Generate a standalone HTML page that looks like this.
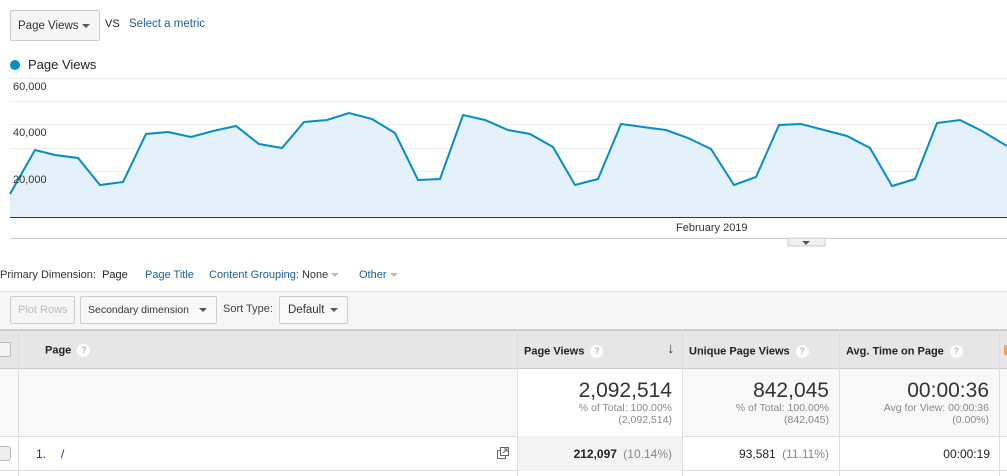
<!DOCTYPE html><html><head><style>
body{margin:0;width:1007px;height:476px;overflow:hidden;background:#fff;font-family:"Liberation Sans",Arial,sans-serif;color:#222;position:relative}
.a{position:absolute}
.btn{position:absolute;border:1px solid #ccc;border-radius:2px;background:#f5f5f5;font-size:11.5px;color:#333;box-sizing:border-box;display:flex;align-items:center;justify-content:space-between;white-space:nowrap;padding:0 9px 0 7px}
.car{display:inline-block;width:0;height:0;border-left:4px solid transparent;border-right:4px solid transparent;border-top:4px solid #555;vertical-align:middle}
.q{display:inline-block;width:13px;height:13px;border-radius:50%;background:#fff;color:#bbb;font-size:9px;text-align:center;line-height:13px;vertical-align:middle;margin-left:6px}
.blue{color:#1a5f9e}
.th{font-weight:bold;font-size:11px;white-space:nowrap}
.r{text-align:right;white-space:nowrap}
</style></head><body>
<div class="btn" style="left:10px;top:10px;width:90px;height:31px">Page Views <span class="car"></span></div>
<div class="a" style="left:105px;top:18px;font-size:11px">VS</div>
<div class="a blue" style="left:129px;top:18px;font-size:11.5px">Select a metric</div>
<div class="a" style="left:10px;top:60px;width:10px;height:10px;border-radius:50%;background:#058dc7"></div>
<div class="a" style="left:28px;top:57px;font-size:13px">Page Views</div>
<svg class="a" style="left:0;top:70px" width="1007" height="180">
<g stroke="#eee" stroke-width="1"><line x1="10" y1="8.5" x2="1007" y2="8.5"/><line x1="10" y1="31.5" x2="1007" y2="31.5"/><line x1="10" y1="54.5" x2="1007" y2="54.5"/><line x1="10" y1="78.5" x2="1007" y2="78.5"/><line x1="10" y1="101.5" x2="1007" y2="101.5"/><line x1="10" y1="124.5" x2="1007" y2="124.5"/></g>
<polygon fill="#e4f1fa" points="10,147 10,124 35,80 55,85 78,88 100,115 123,112 146,64 168,62 191,67 213,61 236,56 259,74 282,78 304,52 327,50 349,43 372,49 395,63 418,110 440,109 463,45 485,50 508,60 530,64 553,77 575,115 598,109 621,54 643,57 666,60 688,68 711,79 734,115 756,107 779,55 801,54 824,60 847,66 870,78 892,116 915,109 937,53 960,50 982,61 1007,76 1007,147"/>
<polyline fill="none" stroke="#058dc7" stroke-width="2" points="10,124 35,80 55,85 78,88 100,115 123,112 146,64 168,62 191,67 213,61 236,56 259,74 282,78 304,52 327,50 349,43 372,49 395,63 418,110 440,109 463,45 485,50 508,60 530,64 553,77 575,115 598,109 621,54 643,57 666,60 688,68 711,79 734,115 756,107 779,55 801,54 824,60 847,66 870,78 892,116 915,109 937,53 960,50 982,61 1007,76"/>
<line x1="10" y1="147.5" x2="1007" y2="147.5" stroke="#333"/>
<line x1="10" y1="168.5" x2="1007" y2="168.5" stroke="#ccc"/>
<rect x="788" y="168" width="37" height="8" fill="#f0f0f0" stroke="#ccc"/>
<path d="M802 171 h8 l-4 4z" fill="#555"/>
</svg>
<div class="a" style="left:13px;top:81px;font-size:11px;color:#333">60,000</div>
<div class="a" style="left:13px;top:127px;font-size:11px;color:#333">40,000</div>
<div class="a" style="left:13px;top:174px;font-size:11px;color:#333">20,000</div>
<div class="a" style="left:676px;top:222px;font-size:11px;color:#333">February 2019</div>
<div class="a" style="left:0;top:269px;font-size:11px;color:#333">Primary Dimension: &nbsp;<span style="color:#222">Page</span></div>
<div class="a blue" style="left:145px;top:269px;font-size:11px">Page Title</div>
<div class="a blue" style="left:209px;top:269px;font-size:11px">Content Grouping: <span style="color:#333">None</span> <span class="car" style="border-top-color:#bbb"></span></div>
<div class="a blue" style="left:359px;top:269px;font-size:11px">Other <span class="car" style="border-top-color:#bbb"></span></div>
<div class="a" style="left:0;top:291px;width:1007px;height:38px;background:#f6f6f6;border-top:1px solid #e5e5e5"></div>
<div class="btn" style="left:10px;top:296px;width:65px;height:28px;color:#bbb;font-size:11px">Plot Rows</div>
<div class="btn" style="left:80px;top:296px;width:137px;height:28px;background:#f8f8f8;font-size:10.5px">Secondary dimension <span class="car"></span></div>
<div class="a" style="left:223px;top:303px;font-size:11px;color:#444">Sort Type:</div>
<div class="btn" style="left:279px;top:296px;width:69px;height:28px;padding-left:8px;background:#f8f8f8">Default <span class="car"></span></div>
<div class="a" style="left:0;top:329px;width:1007px;height:40px;background:#e6e6e6;border-top:2px solid #ccc;border-bottom:1px solid #ccc;box-sizing:border-box"></div>
<div class="a" style="left:0;top:369px;width:1007px;height:67px;background:#f8f8f8;border-bottom:1px solid #ddd"></div>
<div class="a" style="left:0;top:436px;width:1007px;height:34px;border-bottom:1px solid #ddd"></div>
<div class="a" style="left:517px;top:369px;width:165px;height:67px;background:#fff"></div>
<div class="a" style="left:517px;top:436px;width:165px;height:35px;background:#f3f3f3"></div>
<div class="a" style="left:18px;top:329px;width:1px;height:147px;background:#ddd"></div>
<div class="a" style="left:517px;top:329px;width:1px;height:147px;background:#ddd"></div>
<div class="a" style="left:682px;top:329px;width:1px;height:147px;background:#ddd"></div>
<div class="a" style="left:839px;top:329px;width:1px;height:147px;background:#ddd"></div>
<div class="a" style="left:999px;top:329px;width:1px;height:147px;background:#ddd"></div>
<div class="a" style="left:1004px;top:345px;width:3px;height:10px;background:#f5a35c"></div>
<div class="a" style="left:-4px;top:342px;width:13px;height:13px;border:1px solid #bbb;background:#f4f4f4;border-radius:2px"></div>
<div class="a" style="left:-4px;top:446px;width:13px;height:13px;border:1px solid #bbb;background:#eee;border-radius:3px"></div>
<div class="a th" style="left:45px;top:344px">Page<span class="q">?</span></div>
<div class="a th" style="left:524px;top:345px">Page Views<span class="q">?</span></div>
<div class="a" style="left:667px;top:340px;font-size:15px;color:#444;font-weight:bold">↓</div>
<div class="a th" style="left:689px;top:345px">Unique Page Views<span class="q">?</span></div>
<div class="a th" style="left:846px;top:345px">Avg. Time on Page<span class="q">?</span></div>
<div class="a r" style="right:335px;top:379px;font-size:21px;color:#333">2,092,514</div>
<div class="a r" style="right:335px;top:402px;font-size:10.5px;color:#888;line-height:12px">% of Total: 100.00%<br>(2,092,514)</div>
<div class="a r" style="right:178px;top:379px;font-size:21px;color:#333">842,045</div>
<div class="a r" style="right:178px;top:402px;font-size:10.5px;color:#888;line-height:12px">% of Total: 100.00%<br>(842,045)</div>
<div class="a r" style="right:18px;top:379px;font-size:21px;color:#333">00:00:36</div>
<div class="a r" style="right:18px;top:402px;font-size:10.5px;color:#888;line-height:12px">Avg for View: 00:00:36<br>(0.00%)</div>
<div class="a" style="left:36px;top:447px;font-size:12px;color:#333">1.</div>
<div class="a" style="left:61px;top:447px;font-size:12px;color:#551a8b">/</div>
<svg class="a" style="left:497px;top:447px" width="12" height="12"><rect x="0.5" y="3.5" width="8" height="8" fill="none" stroke="#666"/><rect x="3.5" y="0.5" width="8" height="8" fill="#fff" stroke="#666"/><path d="M6 6 L10 2 M7 2 h3 v3" stroke="#666" fill="none"/></svg>
<div class="a r" style="right:335px;top:447px;font-size:12px"><b>212,097</b> <span style="color:#888;margin-left:3px">(10.14%)</span></div>
<div class="a r" style="right:178px;top:447px;font-size:12px">93,581 <span style="color:#888;margin-left:3px">(11.11%)</span></div>
<div class="a r" style="right:17px;top:447px;font-size:12px">00:00:19</div>
</body></html>
